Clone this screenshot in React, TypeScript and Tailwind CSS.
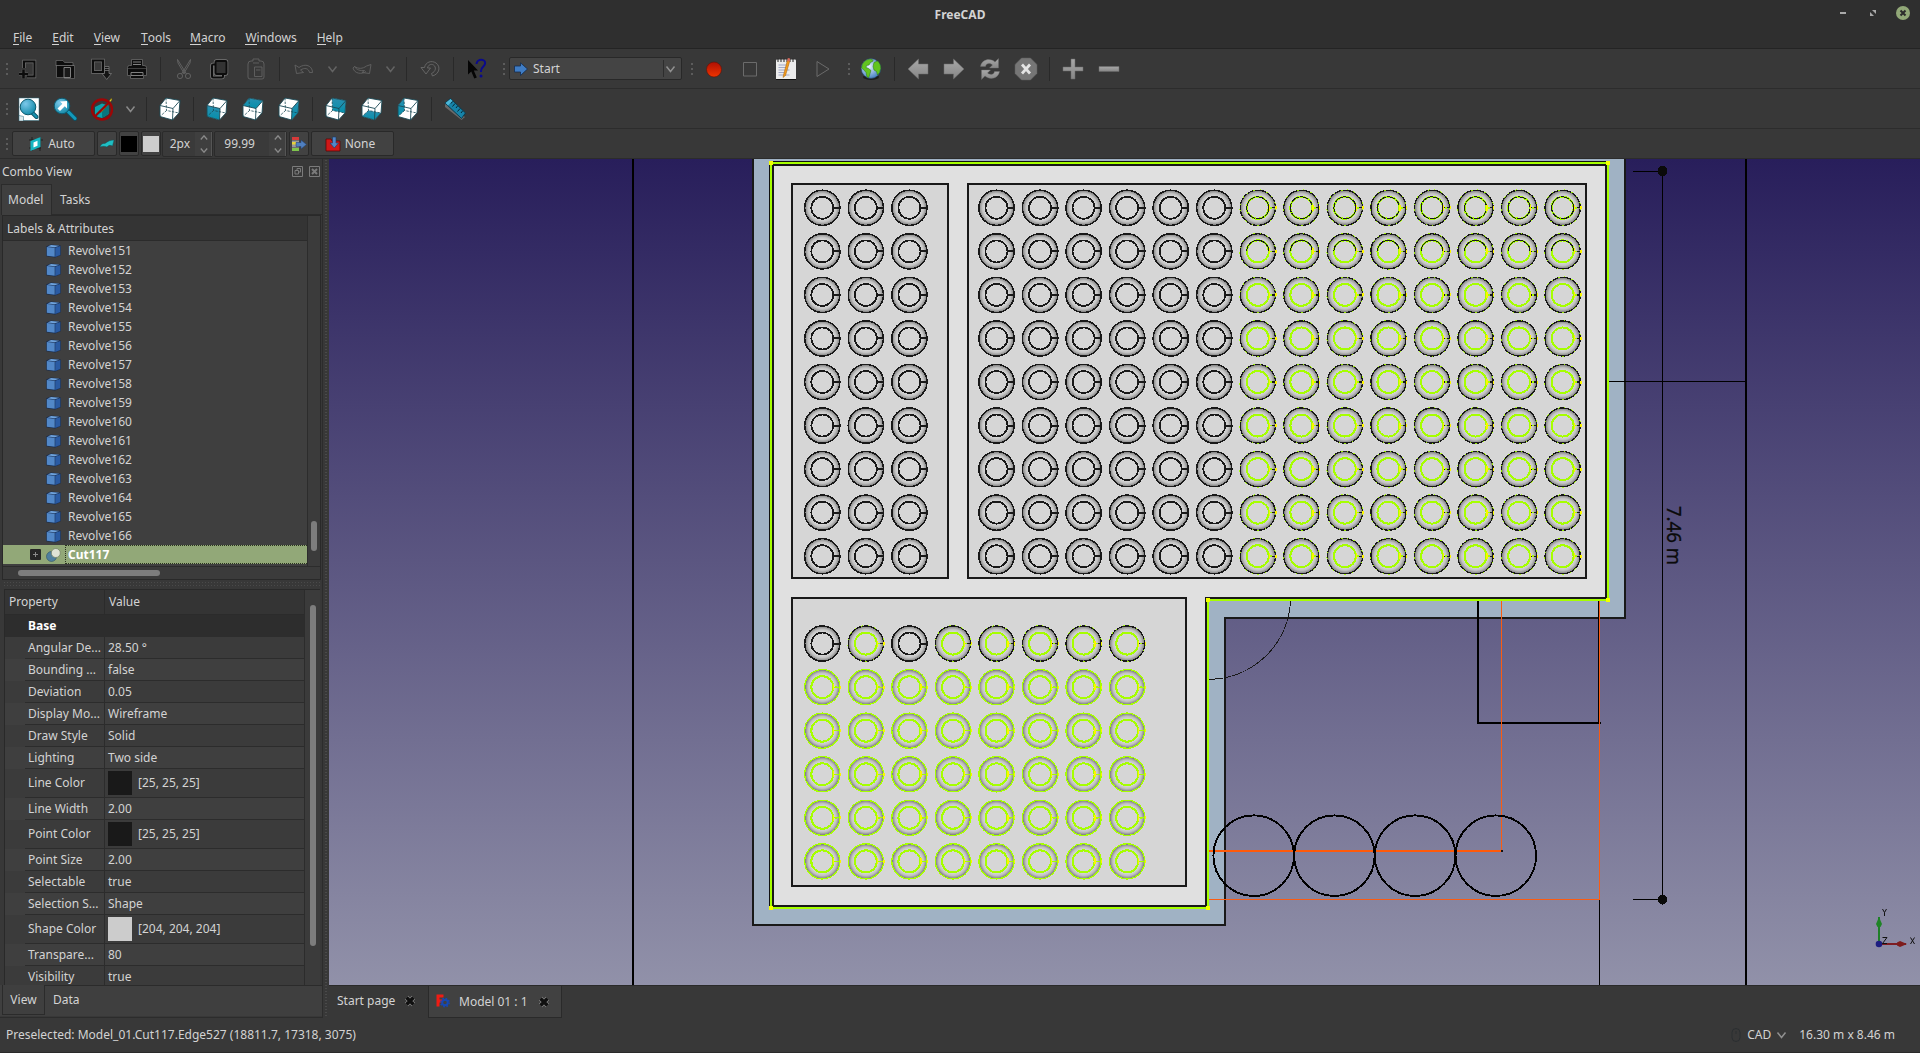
import type { ReactNode } from "react";

/* ---------- shared bits ---------- */

function Icon({ className = "", children }: { className?: string; children: ReactNode }) {
  return (
    <svg viewBox="0 0 24 24" className={`h-6 w-6 shrink-0 ${className}`} fill="none">
      {children}
    </svg>
  );
}

function Handle({ className = "" }: { className?: string }) {
  return (
    <div className={`flex w-[3px] shrink-0 flex-col items-center gap-[3px] ${className}`}>
      <span className="h-[2px] w-[2px] bg-[#5c5c5c]" />
      <span className="h-[2px] w-[2px] bg-[#5c5c5c]" />
      <span className="h-[2px] w-[2px] bg-[#5c5c5c]" />
    </div>
  );
}

function Sep({ className = "" }: { className?: string }) {
  return <div className={`h-6 w-px shrink-0 bg-[#292929] ${className}`} />;
}

function Chevron({ className = "", color = "#8a8a8a" }: { className?: string; color?: string }) {
  return (
    <svg viewBox="0 0 12 12" className={`h-3 w-3 shrink-0 ${className}`} fill="none" stroke={color} strokeWidth="1.5">
      <path d="M2.500 3.500 6.500 8.500 10.500 3.500" />
    </svg>
  );
}

/* ---------- cube view icons ---------- */

const faces: Record<string, string> = {
  front: "2,8.5 15,11.5 14.5,23 2,19.5",
  top: "8,1 22,3.5 15,11.5 2,8.5",
  right: "22,3.5 21,16 14.5,23 15,11.5",
  rear: "8,1 22,3.5 21,16 8.5,13.5",
  bottom: "2,19.5 8.5,13.5 21,16 14.5,23",
  left: "8,1 8.5,13.5 2,19.5 2,8.5",
};

function Cube({ face, className = "" }: { face?: string; className?: string }) {
  return (
    <Icon className={className}>
      <path d="M8 1 22 3.5 21 16 14.5 23 2 19.5 2 8.5Z" fill="#fff" />
      {face && <polygon points={faces[face]} fill="url(#tealFace)" />}
      <g stroke="#1c4a56" strokeWidth=".9">
        <path d="M8 1 22 3.5 21 16 14.5 23 2 19.5 2 8.5Z" strokeLinejoin="round" />
        <path d="M2 8.5 15 11.5 22 3.5M15 11.5 14.5 23" />
        <path d="M8 1 8.5 13.5 21 16M8.5 13.5 2 19.5" strokeWidth=".8" strokeDasharray="2.4 1.2" />
      </g>
    </Icon>
  );
}

/* ---------- toolbars ---------- */

function FileToolbar() {
  return (
    <div className="flex h-10 shrink-0 items-center border-b border-[#2c2c2c] bg-[#383838] pl-[5px]">
      <Handle />
      <Icon className="ml-2">
        <g stroke="#6e6e6e" strokeWidth="3.4"><path d="M8 11V4.500h10.500v15H11" /><path d="M7.500 12.500v9M3 17h9" /></g>
        <g stroke="#0c0c0c" strokeWidth="2"><path d="M8 11V4.500h10.500v15H11" /><path d="M7.500 12.500v9M3 17h9" strokeWidth="2.600" /></g>
      </Icon>
      <Icon className="ml-[13px]">
        <path d="M3 3.500h7l1.500 2H20v3h1.500v13h-10v-1H3.500V9H3z" fill="#0d0d0d" stroke="#656565" strokeWidth=".8" />
        <path d="M3 8.500h18" stroke="#777" strokeWidth=".8" />
        <path d="M11 10.500h6.500V20.500H11z" fill="#1a1a1a" stroke="#8a8a8a" strokeWidth=".9" />
      </Icon>
      <Icon className="ml-3">
        <path d="M4 3.500h10v11.500H4z" stroke="#6e6e6e" strokeWidth="3.600" />
        <path d="M4 3.500h10v11.500H4z" stroke="#0c0c0c" strokeWidth="2.200" />
        <path d="M15.500 9.500h4.500v7h2.500l-4.800 6-4.700-6h2.500z" fill="#151515" stroke="#777" strokeWidth=".8" />
        <path d="M15.500 11.500h4.500M15.500 13.500h4.500" stroke="#777" strokeWidth=".8" />
      </Icon>
      <Icon className="ml-3">
        <path d="M6.500 2.500h11v6H19q2.500 0 2.500 2v8h-3v3H5.500v-3h-3v-8q0-2 2-2h2z" fill="#0d0d0d" stroke="#6a6a6a" strokeWidth=".8" />
        <path d="M8 5h8M8 7.500h8M6 15.500h12v3H6z" stroke="#8c8c8c" strokeWidth=".9" />
        <path d="M2.500 11.500h19" stroke="#555" strokeWidth=".7" />
      </Icon>
      <Sep className="ml-[11px]" />
      <Icon className="ml-[11px]">
        <g stroke="#656565" strokeWidth=".9">
          <path d="M5.500 2.500 14.500 17M18.500 2.500 9.500 17M5.500 2.500 6 6l6.500 11M18.500 2.500 18 6l-6.500 11" />
          <circle cx="8" cy="19" r="2.600" /><circle cx="16" cy="19" r="2.600" />
        </g>
      </Icon>
      <Icon className="ml-[11px]">
        <g stroke="#777" strokeWidth="3.400"><rect x="5" y="7.500" width="11" height="13" rx="1" /><rect x="8.500" y="4" width="11" height="13" rx="1" /></g>
        <g stroke="#0c0c0c" strokeWidth="2"><rect x="5" y="7.500" width="11" height="13" rx="1" /><rect x="8.500" y="4" width="11" height="13" rx="1" fill="#333" /></g>
      </Icon>
      <Icon className="ml-[13px]">
        <g stroke="#626262" strokeWidth=".9">
          <path d="M7 4h2V2h6v2h2q3 0 3 3v13q0 2-2 2H6q-2 0-2-2V7q0-3 3-3z" /><path d="M9 6h6M10.500 10h7.500v9.500h-7.500z" /><path d="M12 13h4.500" />
        </g>
      </Icon>
      <Sep className="ml-[11px]" />
      <Icon className="ml-3">
        <path d="M3 8 4.500 16.500l7-1-3-2.500c4-2.500 8-2 9 2.500h3C20.500 8.500 13 6 7 10.500z" stroke="#626262" strokeWidth=".9" />
      </Icon>
      <Chevron className="ml-[10px]" color="#636363" />
      <Icon className="ml-3">
        <path d="M21 7.500l-1.500 9-7.500-1 2.500-2c-4 .5-8-.5-10-4L3 11c1.500 6 9 6.500 13 3.500" stroke="#626262" strokeWidth=".9" />
        <path d="M4.500 9.500c4 2.500 8 2.500 12-.5L21 7.500" stroke="#626262" strokeWidth=".9" />
      </Icon>
      <Chevron className="ml-[10px]" color="#636363" />
      <Sep className="ml-[10px]" />
      <Icon className="ml-[11px]">
        <path d="M3 10.500l5 6.500 4.500-6h-3c.5-3 3.500-4.500 6-3 3 2 2.500 6.500-2 8.500l1 2.500c7-2 8.500-9.500 3.500-13C13.500 3 7.500 5 6.500 10.500z" stroke="#6a6a6a" strokeWidth=".9" />
      </Icon>
      <Sep className="ml-[11px]" />
      <Icon className="ml-3">
        <path d="M2 3v14.500l3.300-3 3 7 2.500-1-3-7H12z" fill="#050505" />
        <path d="M10.500 7c.5-6 10-5.500 8.500 0-.8 3-4 3-4 7v1" stroke="#0a0a8c" strokeWidth="2" />
        <circle cx="15" cy="19" r="1.500" fill="#0a0a8c" />
      </Icon>
      <Handle className="ml-3" />
      <div className="ml-1 flex h-[23px] w-[173px] shrink-0 items-center rounded-[2px] border border-[#282828] bg-[#444] pl-1">
        <svg viewBox="0 0 14 14" className="h-[14px] w-[14px]">
          <path d="M.5 4h6V.8l7 6.200-7 6.500V10h-6z" fill="#3f7cc4" stroke="#142c4e" strokeWidth=".8" />
        </svg>
        <span className="ml-[5px] flex-1">Start</span>
        <span className="h-[17px] w-px bg-[#2d2d2d]" />
        <Chevron className="mr-[5px]" color="#909090" />
      </div>
      <Handle className="ml-2" />
      <Icon className="ml-[9px]"><circle cx="12" cy="12.500" r="7.500" fill="url(#recordRed)" stroke="#5b1208" strokeWidth=".6" /></Icon>
      <Icon className="ml-3"><path d="M5.500 5.500h13v13.500h-13z" stroke="#6b6b6b" /></Icon>
      <Icon className="ml-3">
        <rect x="2" y="2.500" width="20" height="20.500" rx="1" fill="#ececec" />
        <path d="M2 22.500h20" stroke="#111" strokeWidth="1" />
        <path d="M4 1.500v3.500M7 1.500v3.500M10 1.500v3.500M13 1.500v3.500M16 1.500v3.500M19 1.500v3.500" stroke="#222" />
        <path d="M4.500 8h10M4.500 10.500h8M4.500 13h11M4.500 15.500h6M4.500 18h11" stroke="#98a0c4" strokeWidth=".9" />
        <path d="M13.300 3.500 9.500 18l-.5 2.500 2.500-2L15.800 4z" fill="#f29a1c" stroke="#a3600c" strokeWidth=".5" />
        <path d="m13.200 4 .6-3 2.400.5-.5 3z" fill="#d66a5c" />
      </Icon>
      <Icon className="ml-[13px]"><path d="M6 4.500 18 12 6 19.500z" stroke="#6b6b6b" /></Icon>
      <Handle className="ml-3" />
      <Icon className="ml-[9px]">
        <ellipse cx="12" cy="20" rx="8" ry="3" fill="#1d1d1d" />
        <circle cx="12" cy="11.500" r="9.900" fill="url(#globeSea)" stroke="#24405f" strokeWidth=".6" />
        <path d="M3.500 7C6 3 9.500 1.800 13 2.200l1.200 1.800-2.700 1.500-1.500 2.500-2.500.5-.5 2 2.500 1 2.500 2-1 3-1.200 4-1.800-.5-1-4.500-2.500-3-2-1.500z" fill="#62c41f" stroke="#2b7510" strokeWidth=".5" />
        <path d="M15 5.500l3.500-1.500c2.300 2 3.300 4.500 3.200 7.500l-1.200 4-2 2.500-1-3.500-2.500-1.500-1-3.500z" fill="#62c41f" stroke="#2b7510" strokeWidth=".5" />
      </Icon>
      <Sep className="ml-[11px]" />
      <Icon className="ml-[11px]"><path d="M2 12 12.500 2v5H22v10h-9.500v5z" fill="url(#greyFill)" stroke="#6c6c6c" strokeWidth=".5" /></Icon>
      <Icon className="ml-3"><path d="M22 12 11.500 2v5H2v10h9.500v5z" fill="url(#greyFill)" stroke="#6c6c6c" strokeWidth=".5" /></Icon>
      <Icon className="ml-3">
        <g fill="url(#greyFill)" stroke="#6c6c6c" strokeWidth=".4">
          <path d="M2.500 9.500C3.500 2.500 12 .5 17 5l3.500-3.500v9.500H11.500l3-3C11.500 5.500 8 6.500 7.500 9.500z" />
          <path d="M21.500 14.500c-1 7-9.500 9-14.500 4.500L3.500 22.500V13h9l-3 3c3 2.500 6.500 1.500 7-1.500z" />
        </g>
      </Icon>
      <Icon className="ml-3">
        <path d="M7.500 1h9L23 7.500v9L16.500 23h-9L1 16.500v-9z" fill="#767676" stroke="#5c5c5c" strokeWidth=".5" />
        <path d="m8 7.500 8 9M16 7.500l-8 9" stroke="#e4e4e4" strokeWidth="2.700" />
      </Icon>
      <Sep className="ml-[11px]" />
      <Icon className="ml-[11px]"><path d="M10 2h4v8h8v4h-8v8h-4v-8H2v-4h8z" fill="url(#greyFill)" stroke="#6a6a6a" strokeWidth=".5" /></Icon>
      <Icon className="ml-3"><path d="M2 9.500h20v5H2z" fill="url(#greyFill)" stroke="#6a6a6a" strokeWidth=".5" /></Icon>
    </div>
  );
}

function ViewToolbar() {
  return (
    <div className="flex h-10 shrink-0 items-center border-b border-[#2c2c2c] bg-[#383838] pl-[5px]">
      <Handle />
      <Icon className="ml-2">
        <path d="M3 1h20v22.500H8l-5-4.500z" fill="#fff" stroke="#2c6b7c" strokeWidth=".5" />
        <path d="m3 18.500 4.500 1v4.500H3z" fill="#dfecef" stroke="#2c6b7c" strokeWidth=".5" />
        <path d="m15.500 15 5 5" stroke="#0b4f63" strokeWidth="4" strokeLinecap="round" />
        <path d="m15.500 15 5 5" stroke="#1790ae" strokeWidth="2.400" strokeLinecap="round" />
        <circle cx="12" cy="10" r="7.800" fill="url(#lens)" stroke="#0c5a70" />
      </Icon>
      <Icon className="ml-[13px]">
        <path d="m15.500 15 6.500 6.500" stroke="#0b5166" strokeWidth="4.600" strokeLinecap="round" />
        <path d="m15.500 15 6.500 6.500" stroke="#139abb" strokeWidth="3" strokeLinecap="round" />
        <circle cx="9" cy="9" r="7.800" fill="url(#lens)" stroke="#0c5a70" />
        <path d="M14 4v7.500l-2.200-2.200L7 14l-2.500-2.500 4.800-4.800L7 4.500z" fill="#fff" />
      </Icon>
      <Icon className="ml-[13px]">
        <path d="m5 10 7-3.500 6.500 2v8.500l-6.500 4-7-2z" fill="#0aa3ac" />
        <path d="m12 12 6.500-3.500v8.500l-6.500 4z" fill="#07777f" />
        <path d="M21.500 1 11.500 13.500l-1 2 2-1.500L22 3z" fill="#d8c42c" stroke="#5a4e0a" strokeWidth=".5" />
        <circle cx="12" cy="12.500" r="10" stroke="#9c0606" strokeWidth="2.300" />
        <path d="M4.800 19.500 19 5.500" stroke="#9c0606" strokeWidth="2.300" />
      </Icon>
      <Chevron className="ml-[10px]" />
      <Sep className="ml-[10px]" />
      <Cube className="ml-[11px]" />
      <Sep className="ml-[11px]" />
      <Cube face="front" className="ml-[11px]" />
      <Cube face="top" className="ml-3" />
      <Cube face="right" className="ml-3" />
      <Sep className="ml-[11px]" />
      <Cube face="rear" className="ml-[11px]" />
      <Cube face="bottom" className="ml-3" />
      <Cube face="left" className="ml-3" />
      <Sep className="ml-[11px]" />
      <Icon className="ml-[11px]">
        <path d="m2 7 3.500 2L22 20l-3.500 3L2 10z" fill="#6a6a6a" />
        <path d="M2 6 7.500 1.500 22.500 16l-4 5.500z" fill="#1783a8" stroke="#0b3a4c" />
        <path d="M2.500 6 7.500 2l2 1.800L5 8.500z" fill="#4db7d8" />
        <path d="m9.500 4.500-1.500 2M12 6.500 9.500 9.500M14.500 9l-1.500 2M17 11.500l-2.500 3M19.500 14l-1.500 2" stroke="#072936" />
      </Icon>
    </div>
  );
}

const btn = "flex h-[25px] shrink-0 items-center justify-center rounded-[2px] border border-[#292929] bg-[#424242]";

function Spin({ value, className }: { value: string; className: string }) {
  return (
    <div className={`flex h-[26px] shrink-0 items-center rounded-[2px] border border-[#2b2b2b] bg-[#3a3a3a] ${className}`}>
      <span className="flex-1 text-right">{value}</span>
      <span className="flex h-full w-[17px] flex-col items-center justify-between border-r border-[#555] bg-[#3f3f3f] py-[3px] pl-[2px]">
        <svg viewBox="0 0 8 5" className="h-[5px] w-2" fill="none" stroke="#8a8a8a" strokeWidth="1.3"><path d="M.8 4.500 4 .8l3.200 3.700" /></svg>
        <svg viewBox="0 0 8 5" className="h-[5px] w-2" fill="none" stroke="#8a8a8a" strokeWidth="1.3"><path d="M.8.5 4 4.200 7.200.5" /></svg>
      </span>
    </div>
  );
}

function DraftToolbar() {
  return (
    <div className="flex h-[30px] shrink-0 items-center border-b border-[#2c2c2c] bg-[#383838] pl-[5px]">
      <Handle />
      <div className={`${btn} ml-1 w-[83px] gap-1 pr-[4px]`}>
        <svg viewBox="0 0 16 16" className="h-4 w-4" fill="none">
          <path d="M1 4h14M1 12h12M4 1v14M12 1v14" stroke="#1b1b1b" strokeWidth=".8" />
          <path d="m2.500 5 10-4v10l-10 4z" fill="#17b5c1" /><path d="m5.500 6.500 4-1.800v5L5.500 11.500z" fill="#fff" />
        </svg>
        Auto
      </div>
      <div className={`${btn} ml-[2px] w-5`}>
        <svg viewBox="0 0 16 10" className="h-[10px] w-4"><path d="M1 8c1-3 3-4 5-3.500C9 2 12 1 15 1l-1.500 6c-2-1-4-1-5.500 1C6 7 3 7 1 8z" fill="#1fbfc4" stroke="#0c4f54" strokeWidth=".4" /></svg>
      </div>
      <div className={`${btn} ml-[2px] w-5`}><span className="h-4 w-4 bg-black" /></div>
      <div className={`${btn} ml-[2px] w-5`}><span className="h-4 w-4 bg-[#cdcdcd]" /></div>
      <Spin value="2px" className="ml-px w-[51px] [&>span:first-child]:pr-[5px]" />
      <Spin value="99.99" className="ml-px w-[73px] [&>span:first-child]:pr-[14px]" />
      <div className={`${btn} ml-[2px] w-5`}>
        <svg viewBox="0 0 16 16" className="h-4 w-4">
          <path d="M1 1h7v3H1z" fill="#d63a3a" /><path d="M1 4.500h7v7H1z" fill="#9a9a9a" /><path d="M1 6h4v2.500H1z" fill="#e6d23c" /><path d="M1 12h7v3H1z" fill="#7fc44c" />
          <path d="M5 6.500h5V4l5.500 4.500L10 13v-2.500H5z" fill="#4f7fc0" stroke="#223f6c" strokeWidth=".5" />
        </svg>
      </div>
      <div className={`${btn} ml-[2px] w-[83px] gap-1 pr-[5px]`}>
        <svg viewBox="0 0 16 16" className="h-4 w-4">
          <path d="M1 3h5l1 2h8v10H1z" fill="#d01818" stroke="#5e0606" strokeWidth=".8" />
          <path d="M7.500 1h3.500v6h2.500L9.300 12 5 7h2.500z" fill="#5287c8" stroke="#1b3b66" strokeWidth=".6" />
        </svg>
        None
      </div>
    </div>
  );
}

/* ---------- combo view ---------- */

const revolves = Array.from({ length: 16 }, (_, i) => `Revolve${151 + i}`);

type Prop = { name: string; value: string; swatch?: string };
const props: Prop[] = [
  { name: "Angular De...", value: "28.50 °" },
  { name: "Bounding ...", value: "false" },
  { name: "Deviation", value: "0.05" },
  { name: "Display Mo...", value: "Wireframe" },
  { name: "Draw Style", value: "Solid" },
  { name: "Lighting", value: "Two side" },
  { name: "Line Color", value: "[25, 25, 25]", swatch: "bg-[#191919]" },
  { name: "Line Width", value: "2.00" },
  { name: "Point Color", value: "[25, 25, 25]", swatch: "bg-[#191919]" },
  { name: "Point Size", value: "2.00" },
  { name: "Selectable", value: "true" },
  { name: "Selection S...", value: "Shape" },
  { name: "Shape Color", value: "[204, 204, 204]", swatch: "bg-[#cccccc]" },
  { name: "Transpare...", value: "80" },
  { name: "Visibility", value: "true" },
];

function SolidIcon() {
  return (
    <svg viewBox="0 0 15 14" className="h-[14px] w-[15px] shrink-0">
      <path d="M.3 2.300 5 .5l9.700 1V11.300L9 13.500.3 12.200z" fill="#182b4c" />
      <path d="m.8 2.900 7.900.8v9.100L.8 11.700z" fill="#5288c8" />
      <path d="M9.200 3.700 14.300 2.100v8.800L9.200 12.900z" fill="#2a5ba3" />
      <path d="m1.300 2.500 3.900-1.500 8.200.8L8.900 3.200z" fill="#6fa3dc" />
    </svg>
  );
}

function TreeView() {
  return (
    <div className="ml-[2px] flex h-[365px] w-[319px] shrink-0 flex-col border border-[#292929]">
      <div className="flex min-h-0 flex-1">
        <div className="w-[305px] shrink-0 overflow-hidden border-r border-[#2c2c2c] bg-[#3f3f3f]">
          <div className="flex h-[25px] items-center border-b border-[#2b2b2b] bg-[#343434] pl-1 pt-[2px]">Labels &amp; Attributes</div>
          {revolves.map((name) => (
            <div key={name} className="flex h-[19px] items-center pl-[43px]">
              <SolidIcon />
              <span className="ml-[7px]">{name}</span>
            </div>
          ))}
          <div className="flex h-[19px] items-center bg-[#92a878] pl-[27px]">
            <span className="flex h-[11px] w-[11px] items-center justify-center rounded-[1px] bg-[#262626]">
              <svg viewBox="0 0 7 7" className="h-[7px] w-[7px]" stroke="#8a8a8a"><path d="M3.500 1v5M1 3.500h5" /></svg>
            </span>
            <svg viewBox="0 0 15 14" className="ml-[5px] h-[14px] w-[15px]">
              <circle cx="5.500" cy="8.500" r="5" fill="#4f7f9e" stroke="#2f5468" strokeWidth=".6" />
              <circle cx="9.800" cy="5" r="4.500" fill="#dfe3d6" stroke="#6e7c62" strokeWidth=".7" />
            </svg>
            <span className="ml-1 flex h-full flex-1 items-center border border-r-0 border-dotted border-[#2b3320] pl-[2px] font-bold text-white">Cut117</span>
          </div>
        </div>
        <div className="flex flex-1 flex-col items-center bg-[#3b3b3b] pt-[305px]">
          <span className="h-[30px] w-[6px] rounded-full bg-[#7d7d7d]" />
        </div>
      </div>
      <div className="flex h-[13px] shrink-0 items-center border-t border-[#2c2c2c] bg-[#3b3b3b] pl-[15px]">
        <span className="h-[6px] w-[142px] rounded-full bg-[#7d7d7d]" />
      </div>
    </div>
  );
}

function PropertyView() {
  return (
    <div className="ml-1 mt-[9px] flex h-[396px] w-[316px] shrink-0 overflow-hidden border-l border-t border-[#292929]">
      <div className="w-[300px] shrink-0 border-r border-[#2c2c2c] bg-[#3f3f3f]">
        <div className="flex h-[25px] items-center border-b border-[#2b2b2b] bg-[#343434]">
          <span className="flex h-full w-[100px] items-center border-r border-[#2b2b2b] pl-1">Property</span>
          <span className="pl-1">Value</span>
        </div>
        <div className="flex h-[22px] items-center bg-[#2d2d2d] pl-[23px] font-bold text-white">Base</div>
        {props.map((p) => (
          <div key={p.name} className={`flex odd:bg-[#3b3b3b] ${p.swatch ? "h-[29px]" : "h-[22px]"}`}>
            <span className="w-5 shrink-0" />
            <span className="flex w-[80px] shrink-0 items-center border-b border-r border-[#2c2c2c] whitespace-nowrap pl-[3px]">{p.name}</span>
            <span className="flex flex-1 items-center border-b border-[#2c2c2c] pl-[3px]">
              {p.swatch && <span className={`mr-[6px] h-6 w-6 ${p.swatch}`} />}
              {p.value}
            </span>
          </div>
        ))}
      </div>
      <div className="flex flex-1 flex-col items-center bg-[#3b3b3b] pt-[15px]">
        <span className="h-[341px] w-[6px] rounded-full bg-[#7d7d7d]" />
      </div>
    </div>
  );
}

function ComboView() {
  return (
    <div className="flex h-[859px] w-[329px] shrink-0">
      <div className="flex w-[323px] flex-col border-b border-r border-[#2c2c2c]">
        <div className="flex h-[25px] shrink-0 items-center pl-[2px] pr-[2px]">
          <span className="flex-1 text-[12px]">Combo View</span>
          <svg viewBox="0 0 28 11" className="h-[11px] w-[28px]" fill="none" stroke="#7b7b7b">
            <path d="M.5.500h10v10H.500zM3 4.500h3.500v3.500H3zM5 4V2.500h3.500V6H7" />
            <path d="M17.500.500h10v10h-10z" />
            <path d="m20 3 5 5M25 3l-5 5" strokeWidth="2" />
          </svg>
        </div>
        <div className="flex h-[31px] shrink-0">
          <span className="ml-px flex w-[51px] items-center border border-b-0 border-[#2b2b2b] bg-[#3f3f3f] pb-px pl-[6px]">Model</span>
          <span className="flex flex-1 items-center border-b border-[#2b2b2b] pl-2 pt-px">Tasks</span>
        </div>
        <TreeView />
        <div className="ml-[3px] -mb-[6px] mt-px h-[5px] w-[318px] shrink-0 bg-[radial-gradient(#4a4a4a_0.6px,transparent_0.7px)] bg-[length:3px_3px]" />
        <PropertyView />
        <div className="flex h-[31px] bg-[#3f3f3f]">
          <span className="ml-[2px] flex h-[30px] w-[43px] items-center justify-center border border-t-0 border-[#2b2b2b] pt-px">View</span>
          <span className="flex flex-1 items-center border-t border-[#2b2b2b] pb-[3px] pl-2">Data</span>
        </div>
      </div>
      <div className="ml-px w-[4px] bg-[radial-gradient(#4a4a4a_0.6px,transparent_0.7px)] bg-[length:4px_3px]" />
    </div>
  );
}

/* ---------- 3D viewport ---------- */

const PITCH = 43.55;
const GREEN = "#a6ff00";
const INK = "#191919";

type RingKind = "ink" | "first" | "second" | "mixed" | "glow";

function Ring({ col, y, kind }: { col: number; y: number; kind: RingKind }) {
  const cx = 822.3 + col * PITCH;
  const lit = kind !== "ink";
  const top = `M${cx - 11} ${y}A11 11 0 0 1 ${cx + 11} ${y}`;
  return (
    <g fill="none" strokeWidth="1.5">
      <circle cx={cx} cy={y} r="17.8" fill="url(#ringShade)" />
      <circle cx={cx} cy={y} r="17.600" stroke={kind === "glow" ? GREEN : INK} strokeWidth={lit ? 1.3 : 1.5} />
      {lit && kind !== "glow" && <circle cx={cx} cy={y} r="18" stroke={GREEN} strokeWidth=".9" strokeDasharray="2 4.300 1 6" />}
      <circle cx={cx} cy={y} r="11" stroke={lit ? GREEN : INK} strokeWidth={lit ? 2 : 1.7} />
      {kind === "first" && <circle cx={cx} cy={y} r="11" stroke={INK} strokeWidth="1" strokeDasharray="9 1" />}
      {kind === "second" && <path d={top} stroke={INK} strokeWidth="1" />}
      <path d={`M${cx + 11} ${y}h7.500`} stroke={kind === "glow" ? GREEN : INK} strokeWidth={lit ? 1.2 : 2} />
      {lit && <path d={`M${cx + 11.500} ${y - 3}v6M${cx + 18.200} ${y - 1.500}v3`} stroke="#fdf500" strokeWidth="1.3" />}
      {lit && <path d={`M${cx + 12.500} ${y}h2`} stroke={GREEN} />}
    </g>
  );
}

function Rings() {
  const upperCols = [0, 1, 2, 4, 5, 6, 7, 8, 9, 10, 11, 12, 13, 14, 15, 16, 17];
  const out: ReactNode[] = [];
  for (let r = 0; r < 9; r++) {
    for (const c of upperCols) {
      const kind: RingKind = c < 10 ? "ink" : r === 0 ? "first" : r === 1 ? "second" : "mixed";
      out.push(<Ring key={`u${r}-${c}`} col={c} y={207.8 + r * PITCH} kind={kind} />);
    }
  }
  for (let r = 0; r < 6; r++) {
    for (let c = 0; c < 8; c++) {
      const kind: RingKind = r > 0 ? "glow" : c === 0 || c === 2 ? "ink" : "mixed";
      out.push(<Ring key={`l${r}-${c}`} col={c} y={643.600 + r * PITCH} kind={kind} />);
    }
  }
  return <g>{out}</g>;
}

function Viewport() {
  return (
    <svg viewBox="329 159 1591 826" className="block h-[826px] w-[1591px] shrink-0" shapeRendering="crispEdges" fill="none">
      <rect x="329" y="159" width="1591" height="826" fill="url(#sky)" />
      <path d="M633 159v826" stroke="#000" strokeWidth="2" />
      <path d="M1746 159v826" stroke="#000" strokeWidth="2" />

      {/* slab */}
      <path d="M753 150H1625V618H1225V925H753Z" fill="#a0b2c4" stroke={INK} strokeWidth="2" />

      {/* plan wiring below the floor */}
      <path d="M1290.500 600A82 82 0 0 1 1208 679.300" stroke={INK} />
      <path d="M1478 600V723H1601" stroke="#000" strokeWidth="2" />
      <path d="M1598.500 600V723" stroke="#000" />
      <path d="M1501.500 600V851M1599.500 600V899.500M1208 899.500H1600" stroke="#fa5c12" />
      <path d="M1208 850.500H1502" stroke="#ff5a0a" strokeWidth="2" />
      <path d="M1599.500 900V985" stroke="#000" />
      <rect x="1501" y="850" width="2" height="2" fill="#111" />
      {[0, 1, 2, 3].map((i) => (
        <circle key={i} cx={1253.700 + i * 80.700} cy="855.700" r="40.300" stroke="#000" strokeWidth="1.900" />
      ))}

      {/* floor */}
      <path d="M770 162H1608V600H1208V908H770Z" fill="#e0e0e0" stroke="#111" strokeWidth="2" />
      <path d="M773 165H1606V598H1206V906H773Z" stroke={INK} strokeWidth="2" />
      <path d="M771 163H1608V600H1208V908H771Z" stroke={GREEN} strokeWidth="2" />
      {[[771, 163], [1608, 163], [1608, 600], [1208, 600], [1208, 908], [771, 908]].map(([x, y]) => (
        <rect key={`${x}-${y}`} x={x - 2} y={y - 2} width="4" height="4" fill="#f4ff00" />
      ))}
      <g fill="#d6d6d6" stroke={INK} strokeWidth="2">
        <rect x="792" y="184" width="156" height="394" />
        <rect x="968" y="184" width="618" height="394" />
        <rect x="792" y="598" width="394" height="288" />
      </g>
      <Rings />

      {/* dimension */}
      <path d="M1609 381.500H1746M1662.500 171V900M1633 171.500H1662M1633 899.500H1662" stroke="#000" />
      <circle cx="1662.500" cy="171" r="5" fill="#0a0a0a" />
      <circle cx="1662.500" cy="899.500" r="5" fill="#0a0a0a" />
      <text transform="translate(1667 506) rotate(90)" fontSize="20" textLength="59" lengthAdjust="spacingAndGlyphs" fill="#0a0a0a" stroke="#0a0a0a" strokeWidth=".3">7.46 m</text>

      {/* axis cross */}
      <g shapeRendering="auto">
        <path d="M1879 943V917" stroke="#1f7f28" strokeWidth="2" />
        <path d="M1879 917l3 7-1.500 3h-3l-1.500-3z" fill="#1f8426" />
        <path d="M1880 944h26" stroke="#7e1c22" strokeWidth="2" />
        <path d="M1907 944l-7-3-3 1.500v3l3 1.500z" fill="#7e1c1c" />
        <circle cx="1879" cy="944" r="3.300" fill="#1d1d80" />
        <g stroke="#111" strokeWidth="1">
          <path d="M1882.500 909l2 3.500 2-3.500M1884.500 912.500v3.500" />
          <path d="M1882.500 937.500h4.500l-4.500 6h4.500" />
          <path d="M1910.500 937.500l4 6.500M1914.500 937.500l-4 6.500" />
        </g>
      </g>
    </svg>
  );
}

/* ---------- document tabs ---------- */

function TabClose({ className = "" }: { className?: string }) {
  return (
    <svg viewBox="0 0 12 12" className={`h-3 w-3 ${className}`} fill="none">
      <path d="m2.500 2.500 7 7M9.500 2.500l-7 7" stroke="#8a8a8a" strokeWidth="4.600" />
      <path d="m2.500 2.500 7 7M9.500 2.500l-7 7" stroke="#101010" strokeWidth="3.400" />
    </svg>
  );
}

function DocTabs() {
  return (
    <div className="flex h-[33px] shrink-0 border-t border-[#2a2a2a]">
      <div className="flex w-[99px] items-center pb-[2px] pl-2">
        Start page
        <TabClose className="ml-auto mr-[12px]" />
      </div>
      <div className="flex w-[134px] items-center border border-t-0 border-[#2a2a2a] bg-[#414141] pl-[7px] pr-[11px]">
        <svg viewBox="0 0 14 14" className="mb-[2px] h-[14px] w-[14px]">
          <path d="M.5.500h7v3h-4v2h3v3h-3v4h-3z" fill="#f01c14" />
          <circle cx="9" cy="8.500" r="2.800" fill="none" stroke="#1648b4" strokeWidth="2" />
          <circle cx="9" cy="8.500" r="4.200" fill="none" stroke="#1648b4" strokeWidth="1.400" strokeDasharray="1.700 1.600" />
        </svg>
        <span className="ml-[9px]">Model 01 : 1</span>
        <TabClose className="ml-auto" />
      </div>
    </div>
  );
}

/* ---------- window ---------- */

const menus = [
  { label: "File", cls: "ml-[13px]" },
  { label: "Edit", cls: "ml-[20px]" },
  { label: "View", cls: "ml-[20px]" },
  { label: "Tools", cls: "ml-[21px]" },
  { label: "Macro", cls: "ml-[19px]" },
  { label: "Windows", cls: "ml-[20px]" },
  { label: "Help", cls: "ml-[20px]" },
];

function Gradients() {
  return (
    <svg className="absolute h-0 w-0">
      <defs>
        <linearGradient id="sky" x1="0" y1="0" x2="0" y2="1"><stop offset="0" stopColor="#281e5b" /><stop offset="1" stopColor="#9191a9" /></linearGradient>
        <linearGradient id="tealFace" x1="0" y1="0" x2="0" y2="1"><stop offset="0" stopColor="#2a8fb0" /><stop offset="1" stopColor="#0690ac" /></linearGradient>
        <linearGradient id="greyFill" x1="0" y1="0" x2="0" y2="1"><stop offset="0" stopColor="#a8a8a8" /><stop offset="1" stopColor="#868686" /></linearGradient>
        <linearGradient id="recordRed" x1="0" y1="0" x2="0" y2="1"><stop offset="0" stopColor="#ae1004" /><stop offset="1" stopColor="#ef3400" /></linearGradient>
        <radialGradient id="globeSea" cx=".4" cy=".4" r=".65"><stop offset="0" stopColor="#e8f2fc" /><stop offset="1" stopColor="#3f7cc0" /></radialGradient>
        <radialGradient id="lens" cx=".35" cy=".3" r=".8"><stop offset="0" stopColor="#7cc8ea" /><stop offset="1" stopColor="#0b86a4" /></radialGradient>
        <radialGradient id="ringShade">
          <stop offset="0" stopColor="#d6d6d6" /><stop offset=".66" stopColor="#d6d6d6" /><stop offset=".8" stopColor="#c2c2c2" /><stop offset=".92" stopColor="#959595" /><stop offset="1" stopColor="#606060" />
        </radialGradient>
      </defs>
    </svg>
  );
}

export default function App() {
  return (
    <div className="flex h-[1053px] w-[1920px] flex-col overflow-hidden bg-[#383838] font-['Noto_Sans',sans-serif] text-[12px] leading-none text-[#d3d3d3]">
      <Gradients />
      <div className="relative h-[28px] shrink-0 bg-[#2f2f2f]">
        <div className="flex h-full items-center justify-center pt-[2px] font-bold">FreeCAD</div>
        <svg viewBox="0 0 72 16" className="absolute right-[9px] top-[5px] h-4 w-[72px]" fill="none">
          <path d="M1 8h6" stroke="#a9a9a9" strokeWidth="2" />
          <path d="M33 5h4v4zM31 7v4h4z" fill="#a9a9a9" />
          <circle cx="64" cy="8" r="7" fill="#92a878" />
          <path d="m61.500 5.500 5 5M66.500 5.500l-5 5" stroke="#2b2b2b" strokeWidth="2" />
        </svg>
      </div>
      <div className="flex h-[21px] shrink-0 items-start border-b border-[#242424] bg-[#2f2f2f] pt-[4px]">
        {menus.map((m) => (
          <span key={m.label} className={m.cls}>
            <span className="inline-block h-[13px] border-b border-[#d3d3d3]">{m.label[0]}</span>{m.label.slice(1)}
          </span>
        ))}
      </div>
      <FileToolbar />
      <ViewToolbar />
      <DraftToolbar />
      <div className="flex h-[859px] shrink-0">
        <ComboView />
        <div className="flex flex-1 flex-col">
          <Viewport />
          <DocTabs />
        </div>
      </div>
      <div className="flex flex-1 items-center border-b border-[#2a2a2a] pl-[6px]">
        <span className="flex-1">Preselected: Model_01.Cut117.Edge527 (18811.7, 17318, 3075)</span>
        <svg viewBox="0 0 10 14" className="mr-[6px] h-[14px] w-[10px]" fill="none" stroke="#2a2e30"><rect x="1" y=".5" width="8" height="13" rx="4" /><path d="M5 3v3" /></svg>
        <span>CAD</span>
        <Chevron className="ml-1 mr-[12px]" color="#909090" />
        <span className="mr-[25px]">16.30 m x 8.46 m</span>
      </div>
    </div>
  );
}
